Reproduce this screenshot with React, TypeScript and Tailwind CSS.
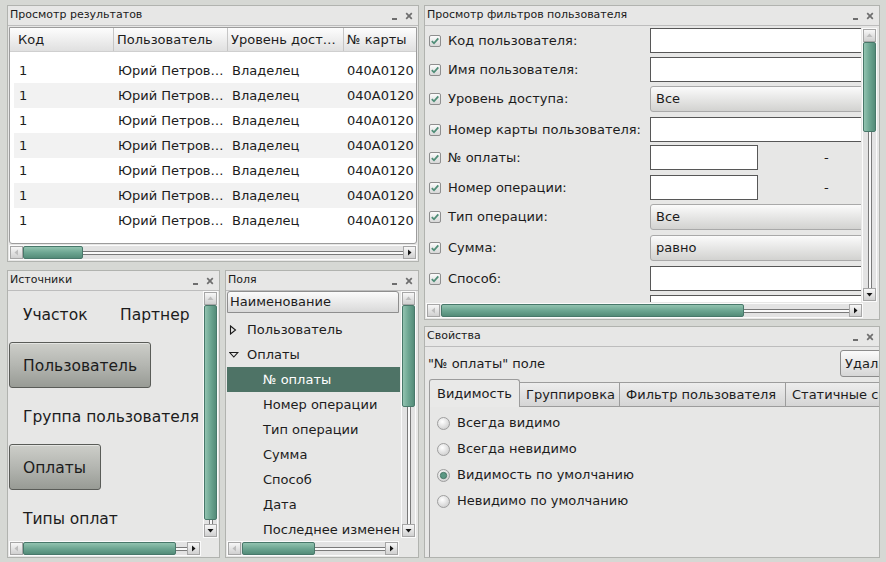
import React from "react"

// Qt-style report designer mock

const rows = Array.from({ length: 7 }, (_, i) => i)

const filterRows = [
  { label: "Код пользователя:", kind: "input", h: "h-[29px]" },
  { label: "Имя пользователя:", kind: "input", h: "h-[29px]" },
  { label: "Уровень доступа:", kind: "combo", value: "Все", h: "h-[31px]" },
  { label: "Номер карты пользователя:", kind: "input", h: "h-[28px]" },
  { label: "№ оплаты:", kind: "small", h: "h-[30px]" },
  { label: "Номер операции:", kind: "small", h: "h-[29px]" },
  { label: "Тип операции:", kind: "combo", value: "Все", h: "h-[31px]" },
  { label: "Сумма:", kind: "combo", value: "равно", h: "h-[31px]" },
  { label: "Способ:", kind: "input", h: "h-[29px]" },
  { label: "", kind: "input", h: "h-[29px]" },
]

const children = ["№ оплаты", "Номер операции", "Тип операции", "Сумма", "Способ", "Дата", "Последнее изменение"]

function Arrow({ dir, disabled }: { dir: "left" | "right" | "up" | "down"; disabled?: boolean }) {
  const pts = {
    left: "6,1.5 6,7.5 2.5,4.5",
    right: "3,1.5 3,7.5 6.5,4.5",
    up: "1.5,6 7.5,6 4.5,2.5",
    down: "1.5,3 7.5,3 4.5,6.5",
  }[dir]
  return (
    <div className="w-[13px] h-[13px] shrink-0 flex items-center justify-center bg-linear-to-b from-[#f7f7f7] to-[#d0d0d0] border border-[#a6a6a6]">
      <svg width="9" height="9" viewBox="0 0 9 9">
        <polygon points={pts} fill={disabled ? "#bdbdbd" : "#151515"} />
      </svg>
    </div>
  )
}

function HScroll({ thumb, className }: { thumb: string; className?: string }) {
  return (
    <div className={`h-[15px] flex items-center bg-[#e3e3e3] border border-[#fbfbfb] ${className ?? ""}`}>
      <Arrow dir="left" disabled />
      <div className="flex-1 min-w-0 h-full flex items-center">
        <div className={`h-[13px] shrink-0 rounded-[2px] border border-[#48786a] bg-linear-to-b from-[#92c3b0] via-[#6da692] to-[#548c79] ${thumb}`} />
        <div className="flex-1 h-[4px] border-y border-[#7a7a7a] bg-[#fafafa]" />
      </div>
      <Arrow dir="right" />
    </div>
  )
}

function VScroll({ thumb, className }: { thumb: string; className?: string }) {
  return (
    <div className={`w-[15px] flex flex-col items-center bg-[#e3e3e3] border border-[#fbfbfb] ${className ?? ""}`}>
      <Arrow dir="up" disabled />
      <div className="flex-1 min-h-0 w-full flex flex-col items-center">
        <div className={`w-[13px] shrink-0 rounded-[2px] border border-[#48786a] bg-linear-to-r from-[#92c3b0] via-[#6da692] to-[#548c79] ${thumb}`} />
        <div className="flex-1 w-[4px] border-x border-[#7a7a7a] bg-[#fafafa]" />
      </div>
      <Arrow dir="down" />
    </div>
  )
}

function Panel({ title, className, children }: { title: string; className?: string; children: React.ReactNode }) {
  return (
    <div className={`border border-[#b1b3af] bg-[#e7e7e6] flex flex-col overflow-hidden ${className ?? ""}`}>
      <div className="h-[20px] shrink-0 flex items-center pl-[2px] border-b border-[#bdbdbd] text-[11px] text-[#1a1a1a]">
        <span>{title}</span>
        <div className="ml-auto flex items-center gap-[8px] pr-[5px]">
          <div className="w-[5px] h-[2px] bg-[#6e6e6e] mt-[6px]" />
          <svg width="8" height="8" viewBox="0 0 8 8">
            <path d="M1.2 1.2L6.8 6.8M6.8 1.2L1.2 6.8" stroke="#6e6e6e" strokeWidth="1.7" />
          </svg>
        </div>
      </div>
      <div className="flex-1 min-h-0 flex flex-col">{children}</div>
    </div>
  )
}

function CheckBox() {
  return (
    <svg width="12" height="12" viewBox="0 0 12 12" className="shrink-0">
      <defs>
        <linearGradient id="cbg" x1="0" y1="0" x2="0" y2="1">
          <stop offset="0" stopColor="#fdfdfd" />
          <stop offset="1" stopColor="#d6d6d6" />
        </linearGradient>
      </defs>
      <rect x="0.5" y="0.5" width="11" height="11" rx="1.5" fill="url(#cbg)" stroke="#8e8e8e" />
      <path d="M2.8 6.1L5 8.3L9.3 3.4" fill="none" stroke="#4f8d77" strokeWidth="1.8" />
    </svg>
  )
}

function Radio({ checked }: { checked?: boolean }) {
  return (
    <svg width="13" height="13" viewBox="0 0 13 13" className="shrink-0">
      <defs>
        <radialGradient id="rdg" cx="0.4" cy="0.35" r="0.7">
          <stop offset="0" stopColor="#ffffff" />
          <stop offset="1" stopColor="#cdcdcd" />
        </radialGradient>
      </defs>
      <circle cx="6.5" cy="6.5" r="6" fill="url(#rdg)" stroke="#9e9e9e" />
      {checked && <circle cx="6.5" cy="6.5" r="3.2" fill="#5c9884" stroke="#3d6c5c" strokeWidth="0.8" />}
    </svg>
  )
}

function Source({ text, active, w }: { text: string; active?: boolean; w?: string }) {
  return (
    <div
      className={`h-[46px] shrink-0 flex items-center px-[13px] pt-[4px] text-[15.5px] whitespace-nowrap rounded-[3px] border ${w ?? ""} ${
        active
          ? "border-[#5a5c58] bg-linear-to-b from-[#cdcec9] via-[#b4b6b1] to-[#989b95] shadow-[inset_0_1px_0_#e4e5e2]"
          : "border-transparent"
      }`}
    >
      {text}
    </div>
  )
}

export default function App() {
  return (
    <div className="w-[886px] h-[562px] bg-[#d6d8d4] flex gap-[5px] pl-[7px] pt-[5px] pr-[6px] pb-[4px] overflow-hidden text-[#1c1c1c] font-['DejaVu_Sans',sans-serif]">
      {/* left column */}
      <div className="w-[412px] flex flex-col gap-[8px]">
        <Panel title="Просмотр результатов" className="h-[257px]">
          <div className="flex-1 min-h-0 flex flex-col px-[1px] pt-[1px] pb-[1px]">
            <div className="flex-1 min-h-0 bg-white border border-[#9c9c9c] rounded-b-[3px] overflow-hidden text-[13px]">
              <div className="h-[24px] flex bg-linear-to-b from-[#fdfdfd] to-[#e0e0e0] border-b border-[#cfcfcf] whitespace-nowrap">
                <div className="w-[104px] pl-[8px] flex items-center border-r border-[#c6c6c6]">Код</div>
                <div className="w-[114px] pl-[3px] flex items-center border-r border-[#c6c6c6]">Пользователь</div>
                <div className="w-[116px] pl-[3px] flex items-center border-r border-[#c6c6c6]">Уровень дост…</div>
                <div className="flex-1 pl-[3px] flex items-center">№ карты</div>
              </div>
              <div className="pt-[6px] pl-[4px]">
                {rows.map((i) => (
                  <div key={i} className={`h-[25px] flex items-center whitespace-nowrap ${i % 2 ? "bg-[#f2f2f2]" : "bg-white"}`}>
                    <div className="w-[100px] pl-[5px]">1</div>
                    <div className="w-[114px] pl-[4px]">Юрий Петров…</div>
                    <div className="w-[116px] pl-[4px]">Владелец</div>
                    <div className="flex-1 pl-[3px]">040A0120</div>
                  </div>
                ))}
              </div>
            </div>
            <HScroll thumb="w-[60px]" className="mt-[1px]" />
          </div>
        </Panel>

        <div className="flex-1 min-h-0 flex gap-[5px]">
          <Panel title="Источники" className="w-[213px]">
            <div className="flex-1 min-h-0 flex">
              <div className="flex-1 min-w-0 overflow-hidden pl-[1px] flex flex-col gap-[5px]">
                <div className="flex gap-[5px]">
                  <Source text="Участок" w="w-[92px]" />
                  <Source text="Партнер" />
                </div>
                <div className="flex">
                  <Source text="Пользователь" active />
                </div>
                <Source text="Группа пользователя" />
                <div className="flex">
                  <Source text="Оплаты" active w="w-[92px]" />
                </div>
                <Source text="Типы оплат" />
              </div>
              <VScroll thumb="h-[215px]" className="mr-[1px] mb-[3px]" />
            </div>
            <div className="h-[15px] flex mb-[1px]">
              <HScroll thumb="w-[153px]" className="ml-[1px] flex-1" />
              <div className="w-[18px]" />
            </div>
          </Panel>

          <Panel title="Поля" className="w-[194px]">
            <div className="flex-1 min-h-0 flex">
              <div className="flex-1 min-w-0 overflow-hidden text-[13px] whitespace-nowrap">
                <div className="h-[22px] ml-[1px] mr-[1px] flex items-center pl-[2px] border border-[#8e8e8e] rounded-t-[3px] bg-linear-to-b from-[#fbfbfb] to-[#d9d9d9]">
                  Наименование
                </div>
                <div className="mt-[4px]">
                  <div className="h-[25px] flex items-center pl-[3px] gap-[8px]">
                    <svg width="10" height="10" viewBox="0 0 10 10">
                      <polygon points="1.5,1 6.5,5 1.5,9" fill="none" stroke="#1a1a1a" strokeWidth="1.1" />
                    </svg>
                    Пользователь
                  </div>
                  <div className="h-[25px] flex items-center pl-[3px] gap-[8px]">
                    <svg width="10" height="10" viewBox="0 0 10 10">
                      <polygon points="0.8,2.5 8.8,2.5 4.8,7" fill="none" stroke="#1a1a1a" strokeWidth="1.1" />
                    </svg>
                    Оплаты
                  </div>
                  {children.map((c, i) => (
                    <div
                      key={c}
                      className={`h-[25px] ml-[1px] flex items-center pl-[36px] ${i === 0 ? "bg-[#4e7366] text-white" : ""}`}
                    >
                      {c}
                    </div>
                  ))}
                </div>
              </div>
              <VScroll thumb="h-[102px]" className="ml-[1px] mr-[2px] mb-[3px]" />
            </div>
            <div className="h-[15px] flex mb-[1px]">
              <HScroll thumb="ml-[1px] w-[73px]" className="ml-[1px] w-[172px]" />
            </div>
          </Panel>
        </div>
      </div>

      {/* right column */}
      <div className="w-[456px] flex flex-col gap-[6px]">
        <Panel title="Просмотр фильтров пользователя" className="h-[315px]">
          <div className="flex-1 min-h-0 flex pt-[2px]">
            <div className="flex-1 min-w-0 overflow-hidden pl-[1px] text-[13px] whitespace-nowrap">
              {filterRows.map((r, i) => (
                <div key={i} className={`${r.h} flex items-start`}>
                  <div className="w-[224px] shrink-0 h-[25px] flex items-center pl-[3px] gap-[7px]">
                    {r.label && <CheckBox />}
                    {r.label}
                  </div>
                  {r.kind === "input" && <div className="h-[25px] w-[240px] shrink-0 bg-white border border-[#575757]" />}
                  {r.kind === "small" && (
                    <div className="flex items-center h-[25px]">
                      <div className="h-[25px] w-[108px] bg-white border border-[#575757]" />
                      <span className="ml-[66px]">-</span>
                    </div>
                  )}
                  {r.kind === "combo" && (
                    <div className="h-[26px] w-[240px] shrink-0 flex items-center pl-[5px] rounded-[3px] border border-[#a9a9a9] bg-linear-to-b from-[#fbfbfb] to-[#d2d2d0]">
                      {r.value}
                    </div>
                  )}
                </div>
              ))}
            </div>
            <VScroll thumb="h-[90px]" className="ml-[1px] mr-[2px]" />
          </div>
          <div className="h-[15px] flex mb-[1px] mt-[1px]">
            <HScroll thumb="ml-[1px] w-[303px]" className="ml-[1px] w-[437px]" />
          </div>
        </Panel>

        <Panel title="Свойства" className="flex-1">
          <div className="flex-1 min-h-0 flex flex-col text-[13px] whitespace-nowrap">
            <div className="h-[32px] flex items-center pl-[3px] pt-[1px]">
              <span>"№ оплаты" поле</span>
              <div className="ml-auto -mr-[13px] w-[52px] h-[27px] shrink-0 overflow-hidden flex items-center pl-[4px] rounded-[3px] border border-[#8c8c8c] bg-linear-to-b from-[#fbfbfb] to-[#d6d6d6]">
                Удалить
              </div>
            </div>
            <div className="h-[28px] flex items-end pl-[4px]">
              <div className="h-[28px] w-[91px] shrink-0 flex items-center pl-[7px] border border-b-0 border-[#9c9c9c] rounded-t-[3px] bg-[#e9e9e8]">
                Видимость
              </div>
              <div className="h-[25px] w-[100px] shrink-0 flex items-center pl-[6px] border-t border-r border-b border-[#9c9c9c] bg-linear-to-b from-[#ededed] to-[#d5d5d5]">
                Группировка
              </div>
              <div className="h-[25px] w-[166px] shrink-0 flex items-center pl-[6px] border-t border-r border-b border-[#9c9c9c] bg-linear-to-b from-[#ededed] to-[#d5d5d5]">
                Фильтр пользователя
              </div>
              <div className="h-[25px] w-[120px] shrink-0 flex items-center pl-[6px] border-t border-b border-[#9c9c9c] bg-linear-to-b from-[#ededed] to-[#d5d5d5]">
                Статичные свойства
              </div>
            </div>
            <div className="flex-1 ml-[4px] border-l border-[#9c9c9c] pt-[3px] pl-[7px]">
              {["Всегда видимо", "Всегда невидимо", "Видимость по умолчанию", "Невидимо по умолчанию"].map((t, i) => (
                <div key={t} className="h-[26px] flex items-center gap-[7px]">
                  <Radio checked={i === 2} />
                  {t}
                </div>
              ))}
            </div>
          </div>
        </Panel>
      </div>
    </div>
  )
}
